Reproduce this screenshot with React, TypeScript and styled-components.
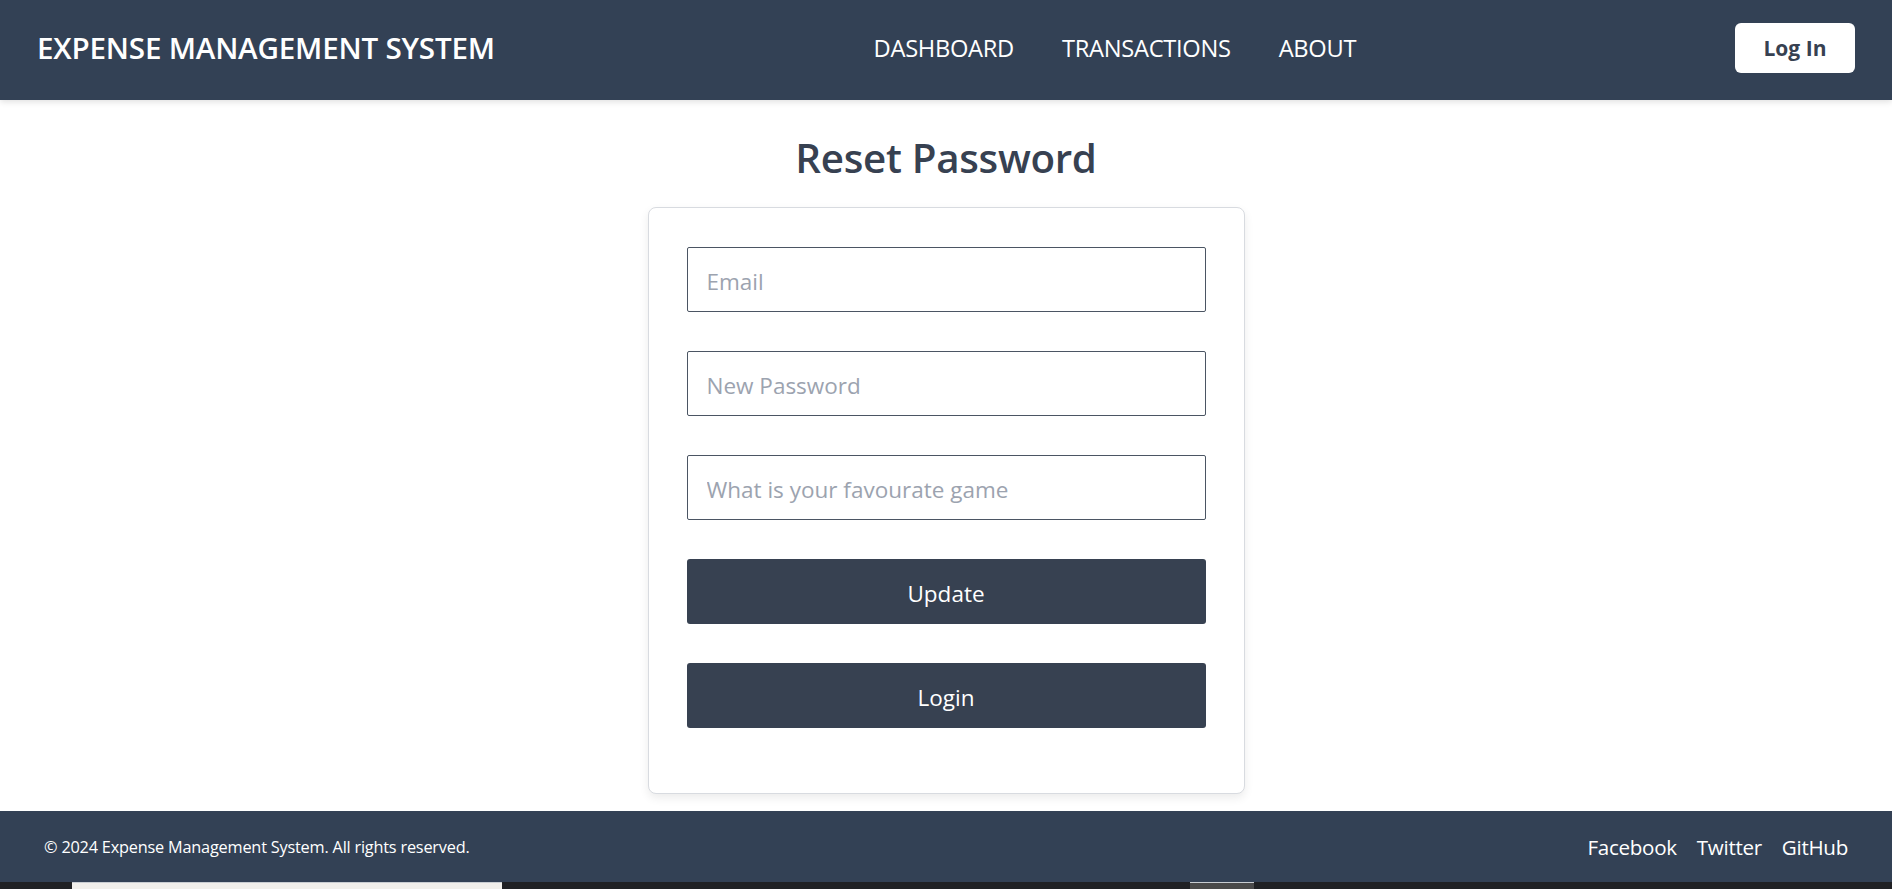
import React from "react";
import styled, { createGlobalStyle } from "styled-components";

const GlobalStyle = createGlobalStyle`
  * { box-sizing: border-box; }
  html, body { margin: 0; padding: 0; background: #ffffff; }
  body {
    font-family: "Open Sans", "Noto Sans", "Liberation Sans", sans-serif;
    color: #374151;
  }
`;

const Page = styled.div`
  display: flex;
  flex-direction: column;
  min-height: 889px;
`;

const Header = styled.header`
  height: 100px;
  background: #334155;
  display: flex;
  align-items: center;
  justify-content: space-between;
  padding: 0 37px 5px;
  box-shadow: 0 2px 6px rgba(0, 0, 0, 0.12);
  position: relative;
  z-index: 1;
`;

const Brand = styled.div`
  color: #ffffff;
  font-size: 29.6px;
  font-weight: 600;
  letter-spacing: -0.2px;
`;

const Nav = styled.nav`
  display: flex;
  gap: 48px;
`;

const NavLink = styled.a`
  color: #ffffff;
  font-size: 23.7px;
  text-decoration: none;
  letter-spacing: -0.3px;
`;

const LoginButton = styled.button`
  width: 120px;
  height: 50px;
  background: #ffffff;
  border: none;
  border-radius: 6px;
  color: #374151;
  font-family: inherit;
  font-size: 21px;
  font-weight: 700;
  cursor: pointer;
`;

const Main = styled.main`
  flex: 1;
  display: flex;
  flex-direction: column;
  align-items: center;
  padding-top: 32px;
  padding-bottom: 17px;
`;

const Title = styled.h1`
  margin: 0 0 23px;
  font-size: 40.3px;
  line-height: 52px;
  font-weight: 600;
  color: #374151;
  letter-spacing: -0.3px;
`;

const Card = styled.form`
  width: 597px;
  background: #ffffff;
  border: 1px solid #d8dbe0;
  border-radius: 8px;
  box-shadow: 0 4px 10px rgba(0, 0, 0, 0.08);
  padding: 39px 38px 65px;
  display: flex;
  flex-direction: column;
  gap: 39px;
`;

const Input = styled.input`
  width: 100%;
  height: 65px;
  border: 1px solid #4b5563;
  border-radius: 2px;
  padding: 3px 19px 0;
  font-family: inherit;
  font-size: 22.5px;
  color: #374151;
  outline: none;
  &::placeholder {
    color: #9ca3af;
  }
`;

const ActionButton = styled.button`
  width: 100%;
  height: 65px;
  padding-top: 4px;
  background: #374151;
  color: #ffffff;
  border: none;
  border-radius: 3px;
  font-family: inherit;
  font-size: 22.5px;
  cursor: pointer;
`;

const Footer = styled.footer`
  height: 71px;
  background: #334155;
  display: flex;
  align-items: center;
  justify-content: space-between;
  padding: 0 44px;
  color: #ffffff;
`;

const Copyright = styled.p`
  margin: 0;
  font-size: 16.3px;
  letter-spacing: -0.2px;
`;

const FooterLinks = styled.div`
  display: flex;
  gap: 20px;
`;

const FooterLink = styled.a`
  color: #ffffff;
  font-size: 20.6px;
  text-decoration: none;
  letter-spacing: -0.3px;
`;

const Taskbar = styled.div`
  height: 7px;
  background: #202124;
  display: flex;
  padding-left: 72px;
`;

const TaskWindow = styled.div<{ $w: number; $bg: string; $ml?: number }>`
  width: ${(p) => p.$w}px;
  margin-left: ${(p) => p.$ml ?? 0}px;
  background: ${(p) => p.$bg};
  border-top: 1px solid #c9cdd2;
`;

export default function App() {
  return (
    <>
      <GlobalStyle />
      <Page>
        <Header>
          <Brand>EXPENSE MANAGEMENT SYSTEM</Brand>
          <Nav>
            <NavLink href="#">DASHBOARD</NavLink>
            <NavLink href="#">TRANSACTIONS</NavLink>
            <NavLink href="#">ABOUT</NavLink>
          </Nav>
          <LoginButton>Log In</LoginButton>
        </Header>
        <Main>
          <Title>Reset Password</Title>
          <Card onSubmit={(e) => e.preventDefault()}>
            <Input type="email" placeholder="Email" />
            <Input type="password" placeholder="New Password" />
            <Input type="text" placeholder="What is your favourate game" />
            <ActionButton type="submit">Update</ActionButton>
            <ActionButton type="button">Login</ActionButton>
          </Card>
        </Main>
        <Footer>
          <Copyright>© 2024 Expense Management System. All rights reserved.</Copyright>
          <FooterLinks>
            <FooterLink href="#">Facebook</FooterLink>
            <FooterLink href="#">Twitter</FooterLink>
            <FooterLink href="#">GitHub</FooterLink>
          </FooterLinks>
        </Footer>
        <Taskbar>
          <TaskWindow $w={430} $bg="#f1efeb" />
          <TaskWindow $w={64} $bg="#4a4a4a" $ml={688} />
        </Taskbar>
      </Page>
    </>
  );
}
